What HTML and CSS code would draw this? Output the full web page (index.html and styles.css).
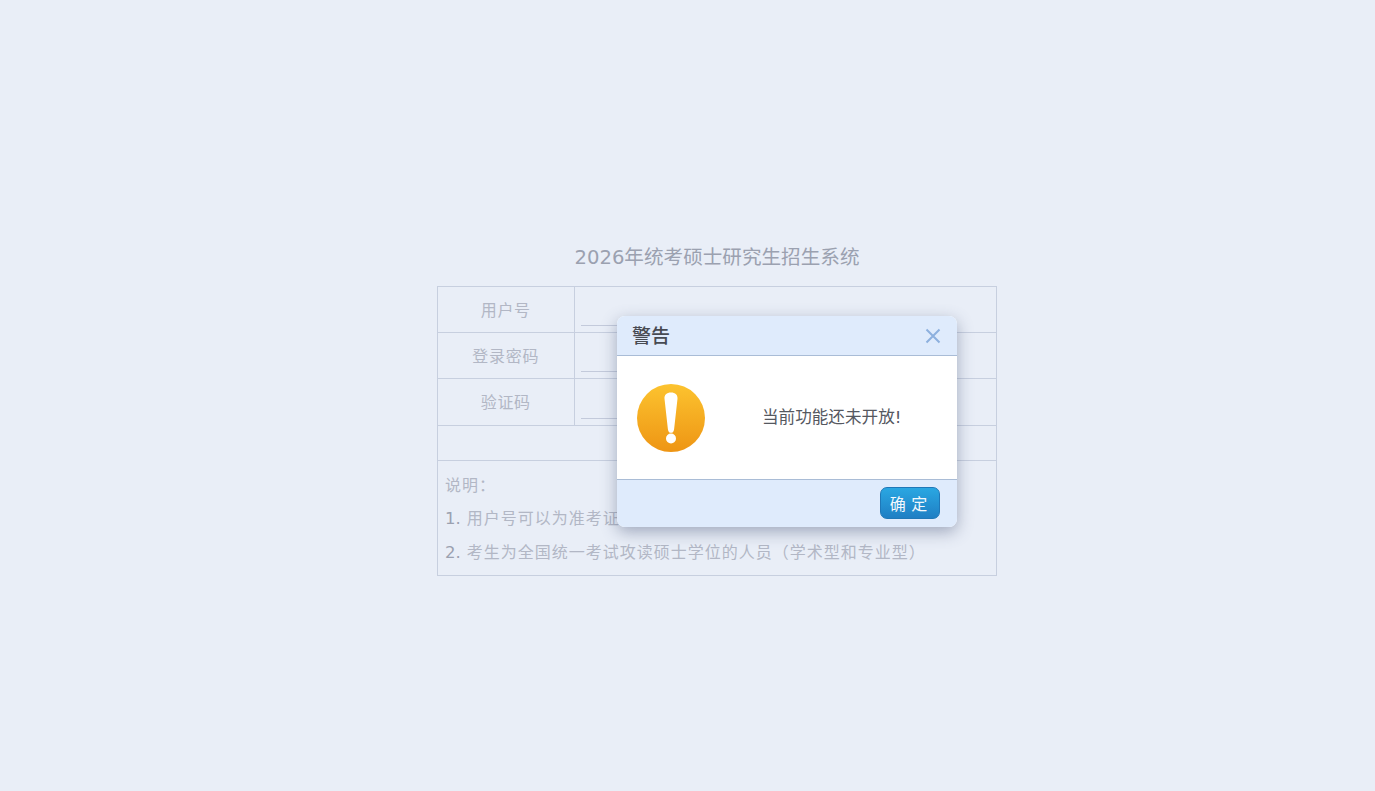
FILE: index.html
```html
<!DOCTYPE html>
<html lang="zh-CN">
<head>
<meta charset="utf-8">
<title>2026年统考硕士研究生招生系统</title>
<link rel="stylesheet" href="styles.css">
</head>
<body>
<main class="page">
  <h1 class="title">2026年统考硕士研究生招生系统</h1>
  <table class="login">
    <tr class="row-a"><th>用户号</th><td><span class="field"></span></td></tr>
    <tr class="row-a"><th>登录密码</th><td><span class="field"></span></td></tr>
    <tr class="row-c"><th>验证码</th><td><span class="field"></span></td></tr>
    <tr class="row-b"><td colspan="2"></td></tr>
    <tr>
      <td colspan="2" class="notes">
        <p>说明：</p>
        <p><span class="num">1.</span> 用户号可以为准考证号或身份证号</p>
        <p><span class="num">2.</span> 考生为全国统一考试攻读硕士学位的人员（学术型和专业型）</p>
      </td>
    </tr>
  </table>
</main>
<section class="dialog" role="dialog" aria-label="警告">
  <header class="dialog-head">
    <h2>警告</h2>
    <svg class="close" viewBox="0 0 16 16" width="16" height="16" aria-label="关闭"><path d="M1.5 1.5 14.5 14.5M14.5 1.5 1.5 14.5"/></svg>
  </header>
  <div class="dialog-body">
    <svg class="warn" viewBox="0 0 68 68" width="68" height="68" aria-hidden="true">
      <defs>
        <linearGradient id="warnfill" x1="0" y1="0" x2="0" y2="1">
          <stop offset="0" stop-color="#fcc32f"/>
          <stop offset="1" stop-color="#ee9514"/>
        </linearGradient>
      </defs>
      <circle cx="34" cy="34" r="34" fill="url(#warnfill)"/>
      <path d="M34 8.500c4.400 0 6.800 2.400 6.500 6.200l-3.400 30.500c-.3 2.500-1.400 3.600-3.100 3.600s-2.800-1.100-3.100-3.600l-3.400-30.500c-.3-3.800 2.100-6.200 6.500-6.200z" fill="#fff"/>
      <circle cx="34" cy="54.500" r="5" fill="#fff"/>
    </svg>
    <p class="message">当前功能还未开放!</p>
  </div>
  <footer class="dialog-foot"><button class="ok" type="button">确 定</button></footer>
</section>
</body>
</html>
```
FILE: styles.css
```css
* { box-sizing: border-box; }
html, body { height: 100%; }
body {
  margin: 0;
  background: #e9eef7;
  font-family: "DejaVu Sans", "Noto Sans CJK SC", sans-serif;
  overflow: hidden;
}
.page {
  width: 560px;
  margin-left: 437px;
  padding-top: 244px;
}
.title {
  margin: 0;
  height: 42px;
  font-size: 19.6px;
  line-height: 28px;
  font-weight: 400;
  text-align: center;
  color: #9ba1b0;
}
.login {
  width: 560px;
  border-collapse: collapse;
  table-layout: fixed;
  border: 1px solid #c7cfdf;
}
.login th, .login td {
  border: 1px solid #c7cfdf;
  padding: 0;
}
.login th {
  width: 136.500px;
  padding-bottom: 2px;
  font-size: 16px;
  font-weight: 400;
  letter-spacing: 0.7px;
  color: #b2b7c5;
}
.row-a { height: 46px; }
.row-c { height: 47px; }
.row-b { height: 35px; }
.field {
  display: block;
  width: 300px;
  height: 39px;
  margin-left: 6px;
  margin-bottom: 6px;
  border-bottom: 1px solid #c3cadb;
}
.login .notes {
  height: 115px;
  padding: 4px 7px 2px;
  font-size: 16px;
  color: #b2b7c5;
  letter-spacing: 1px;
}
.notes p {
  margin: 0;
  height: 33.5px;
  line-height: 33.5px;
}
.num { color: #9ba1b0; letter-spacing: 0; font-size: 16.5px; }
.dialog {
  position: absolute;
  left: 617px;
  top: 316px;
  width: 340px;
  height: 211px;
  display: flex;
  flex-direction: column;
  border-radius: 8px;
  background: #fff;
  box-shadow: 0 5px 16px rgba(70, 85, 120, 0.45);
  overflow: hidden;
}
.dialog-head {
  flex: 0 0 40px;
  display: flex;
  align-items: center;
  justify-content: space-between;
  padding: 0 16px 0 15px;
  background: #dfebfc;
  border-bottom: 1px solid #a9bcd6;
}
.dialog-head h2 {
  margin: 0;
  font-size: 19px;
  line-height: 28px;
  font-weight: 500;
  color: #474a52;
}
.close { fill: none; stroke: #8db0de; stroke-width: 2; }
.dialog-body {
  flex: 1;
  display: flex;
  align-items: flex-start;
  padding: 28px 20px 0 20px;
}
.warn { flex: none; filter: blur(0.4px); }
.message {
  flex: 1;
  margin: 20px 0 0;
  padding-left: 57px;
  font-size: 16.6px;
  line-height: 28px;
  white-space: nowrap;
  color: #55585f;
}
.dialog-foot {
  flex: 0 0 48px;
  display: flex;
  justify-content: flex-end;
  padding: 7px 17px 0 0;
  background: #dfebfc;
  border-top: 1px solid #a9bcd6;
}
.ok {
  width: 60px;
  height: 32px;
  padding: 0 2px 0 0;
  border: 1px solid #1f78b8;
  border-radius: 7px;
  background: linear-gradient(#2aa7e2, #1f7fc4);
  color: #f2f8fd;
  letter-spacing: 1px;
  font-family: "Noto Sans CJK SC", sans-serif;
  font-size: 16px;
}
```
